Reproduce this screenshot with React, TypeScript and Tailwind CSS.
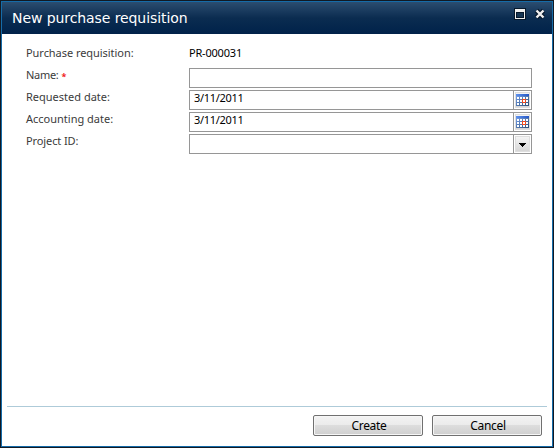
import type { ReactNode } from "react";

function CalendarIcon() {
  return (
    <svg width="13" height="12" viewBox="0 0 13 12" className="shrink-0" shapeRendering="crispEdges">
      <defs>
        <linearGradient id="cal" x1="0" y1="0" x2="1" y2="1">
          <stop offset="0" stopColor="#7ba5f0" />
          <stop offset="1" stopColor="#2d4e74" />
        </linearGradient>
        <linearGradient id="calTop" x1="0" y1="0" x2="1" y2="0">
          <stop offset="0" stopColor="#5f92ee" />
          <stop offset="1" stopColor="#2456c4" />
        </linearGradient>
      </defs>
      <rect width="13" height="12" fill="url(#cal)" />
      <rect width="13" height="2" fill="url(#calTop)" />
      {[3, 6, 9].map((y) =>
        [1, 4, 7, 10].map((x) => <rect key={`${x}-${y}`} x={x} y={y} width="2" height="2" fill="#fff" />)
      )}
      <path d="M6 5h4v4H6zM7 6v2h2V6z" fill="#f04a1c" fillRule="evenodd" />
    </svg>
  );
}

function Field({ value = "", children }: { value?: string; children?: ReactNode }) {
  return (
    <div className="flex h-5 w-[343px] border border-[#969696] bg-white">
      <div className="flex-1 pl-1 text-[11px] leading-[13px] text-black">
        <span className="tracking-[-0.3px]">{value}</span>
      </div>
      {children && (
        <div className="w-[18px] border-l border-[#969696] p-px">
          <div className="flex h-4 w-[15px] items-center justify-center border border-[#dedede] bg-linear-to-b from-[#f4f4f4] to-[#d6d6d6]">
            {children}
          </div>
        </div>
      )}
    </div>
  );
}

function Row({ label, spacing, required, children }: { label: string; spacing: string; required?: boolean; children: ReactNode }) {
  return (
    <div className="flex h-[22px]">
      <div className="w-[163px] whitespace-nowrap text-[11px] leading-[13px] text-[#3b3b3b]">
        <span className={spacing}>{label}</span>
        {required && <span className="relative top-px ml-[3px] text-[9px] font-bold text-[#f02020]">*</span>}
      </div>
      {children}
    </div>
  );
}

function Button({ children }: { children: ReactNode }) {
  return (
    <button className="h-[21px] w-[110px] rounded-[2px] border border-[#707070] bg-[linear-gradient(#f3f3f3,#ebebeb_49%,#dddddd_50%,#cfcfcf)] pl-[2px] text-[12px] leading-[18px] tracking-[-0.3px] text-black shadow-[inset_0_0_0_1px_#f6f6f6]">
      {children}
    </button>
  );
}

export default function App() {
  return (
    <div className="h-[448px] w-[554px] border border-[#111923] font-['Noto_Sans','Open_Sans',sans-serif]">
      <div className="flex h-full flex-col border border-[#156ba8] bg-white">
        <header className="flex h-8 shrink-0 items-center justify-between bg-linear-to-b from-[#2b4d70] via-[#0b2c50] to-[#01224a] pl-[10px] pr-[6px]">
          <h1 className="font-['DejaVu_Sans',sans-serif] text-[14px] leading-8 tracking-[-0.08px] text-white">New purchase requisition</h1>
          <div className="flex h-full gap-[8px] pt-[6px]">
            <svg width="12" height="12" viewBox="0 0 12 12" shapeRendering="crispEdges">
              <rect width="12" height="12" fill="#07182b" />
              <path d="M1 1h10v10H1z" fill="#f0f0f0" />
              <path d="M2 4h8v6H2z" fill="#07182b" />
              <path d="M3 5h6v4H3z" fill="#173654" />
            </svg>
            <svg width="12" height="12" viewBox="0 0 12 12">
              <path d="M2.5 2.5L9.5 9.5M9.5 2.5L2.5 9.5" stroke="#07182b" strokeWidth="4.6" />
              <path d="M2.5 2.5L9.5 9.5M9.5 2.5L2.5 9.5" stroke="#f0f0f0" strokeWidth="2.4" />
            </svg>
          </div>
        </header>
        <main className="flex-1 pl-6 pt-3">
          <Row label="Purchase requisition:" spacing="tracking-[-0.05px]">
            <span className="text-[11px] leading-[13px] tracking-[-0.2px] text-black">PR-000031</span>
          </Row>
          <Row label="Name:" spacing="tracking-[-0.3px]" required>
            <Field />
          </Row>
          <Row label="Requested date:" spacing="tracking-normal">
            <Field value="3/11/2011"><CalendarIcon /></Field>
          </Row>
          <Row label="Accounting date:" spacing="tracking-normal">
            <Field value="3/11/2011"><CalendarIcon /></Field>
          </Row>
          <Row label="Project ID:" spacing="tracking-[-0.1px]">
            <Field>
              <svg width="7" height="4" viewBox="0 0 7 4" className="mt-0.5" shapeRendering="crispEdges">
                <path d="M0 0h7v1H6v1H5v1H4v1H3V3H2V2H1V1H0z" fill="#000" />
              </svg>
            </Field>
          </Row>
        </main>
        <footer className="mx-[5px] flex h-10 justify-end gap-[9px] border-t border-[#aecbd9] pr-[5px] pt-2">
          <Button>Create</Button>
          <Button>Cancel</Button>
        </footer>
      </div>
    </div>
  );
}
